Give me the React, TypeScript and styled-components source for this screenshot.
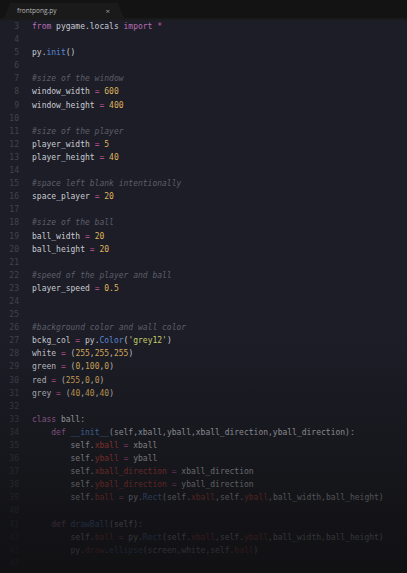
import React from "react";
import styled, { createGlobalStyle } from "styled-components";

const Global = createGlobalStyle`
  html, body { margin: 0; padding: 0; background: #1c1d26; }
  body { width: 407px; height: 573px; overflow: hidden; }
`;

const Window = styled.div`
  position: relative;
  width: 407px;
  height: 573px;
  background: #1c1d26;
  overflow: hidden;
  display: flex;
  flex-direction: column;
`;

const TabBar = styled.div`
  height: 18px;
  background: #131313;
  border-bottom: 2px solid #1a1a1a;
  display: flex;
  align-items: flex-end;
  padding-left: 4px;
`;

const Tab = styled.div`
  width: 120px;
  height: 15px;
  background: #1a1a1a;
  clip-path: polygon(6px 0, 114px 0, 120px 100%, 0 100%);
  display: flex;
  align-items: center;
  justify-content: space-between;
  padding: 0 14px 0 13px;
  box-sizing: border-box;
  font-family: "Open Sans", "Liberation Sans", sans-serif;
  font-size: 6.5px;
  color: #b8b8b8;
`;

const Close = styled.span`
  font-size: 8px;
  color: #9a9a9a;
`;

const Editor = styled.div`
  flex: 1;
  font-family: "DejaVu Sans Mono", "Liberation Mono", monospace;
  font-size: 8px;
`;

const Line = styled.div`
  display: flex;
  height: 13.1px;
  line-height: 13.1px;
  white-space: pre;
`;

const Num = styled.span`
  width: 19px;
  text-align: right;
  color: #42444f;
  flex-shrink: 0;
`;

const Code = styled.span`
  padding-left: 13px;
  color: #c9cbd2;
`;

const colors: Record<string, string> = {
  t: "#c9cbd2",
  k: "#b86fb4",
  o: "#c9589c",
  n: "#dfb25e",
  s: "#c7d26c",
  f: "#5b8ad8",
  a: "#c4463e",
  c: "#5c5e6a",
};

const Tok = styled.span<{ $k: string }>`
  color: ${(p) => colors[p.$k]};
  font-style: ${(p) => (p.$k === "c" ? "italic" : "normal")};
`;

const Fade = styled.div`
  position: absolute;
  left: 0;
  right: 0;
  bottom: 0;
  height: 240px;
  pointer-events: none;
  background: linear-gradient(to bottom, rgba(16,16,18,0) 0%, rgba(16,16,18,0.4) 45%, rgba(16,16,18,0.78) 80%, rgba(16,16,18,0.9) 100%);
`;

type T = [string, string];
const lines: T[][] = [
  [["from", "k"], [" pygame.locals ", "t"], ["import", "k"], [" *", "o"]],
  [],
  [["py.", "t"], ["init", "f"], ["()", "t"]],
  [],
  [["#size of the window", "c"]],
  [["window_width ", "t"], ["=", "o"], [" ", "t"], ["600", "n"]],
  [["window_height ", "t"], ["=", "o"], [" ", "t"], ["400", "n"]],
  [],
  [["#size of the player", "c"]],
  [["player_width ", "t"], ["=", "o"], [" ", "t"], ["5", "n"]],
  [["player_height ", "t"], ["=", "o"], [" ", "t"], ["40", "n"]],
  [],
  [["#space left blank intentionally", "c"]],
  [["space_player ", "t"], ["=", "o"], [" ", "t"], ["20", "n"]],
  [],
  [["#size of the ball", "c"]],
  [["ball_width ", "t"], ["=", "o"], [" ", "t"], ["20", "n"]],
  [["ball_height ", "t"], ["=", "o"], [" ", "t"], ["20", "n"]],
  [],
  [["#speed of the player and ball", "c"]],
  [["player_speed ", "t"], ["=", "o"], [" ", "t"], ["0.5", "n"]],
  [],
  [],
  [["#background color and wall color", "c"]],
  [["bckg_col ", "t"], ["=", "o"], [" py.", "t"], ["Color", "f"], ["(", "t"], ["'grey12'", "s"], [")", "t"]],
  [["white ", "t"], ["=", "o"], [" (", "t"], ["255", "n"], [",", "t"], ["255", "n"], [",", "t"], ["255", "n"], [")", "t"]],
  [["green ", "t"], ["=", "o"], [" (", "t"], ["0", "n"], [",", "t"], ["100", "n"], [",", "t"], ["0", "n"], [")", "t"]],
  [["red ", "t"], ["=", "o"], [" (", "t"], ["255", "n"], [",", "t"], ["0", "n"], [",", "t"], ["0", "n"], [")", "t"]],
  [["grey ", "t"], ["=", "o"], [" (", "t"], ["40", "n"], [",", "t"], ["40", "n"], [",", "t"], ["40", "n"], [")", "t"]],
  [],
  [["class", "k"], [" ball:", "t"]],
  [["    ", "t"], ["def", "k"], [" ", "t"], ["__init__", "f"], ["(self,xball,yball,xball_direction,yball_direction):", "t"]],
  [["        self.", "t"], ["xball", "a"], [" ", "t"], ["=", "o"], [" xball", "t"]],
  [["        self.", "t"], ["yball", "a"], [" ", "t"], ["=", "o"], [" yball", "t"]],
  [["        self.", "t"], ["xball_direction", "a"], [" ", "t"], ["=", "o"], [" xball_direction", "t"]],
  [["        self.", "t"], ["yball_direction", "a"], [" ", "t"], ["=", "o"], [" yball_direction", "t"]],
  [["        self.", "t"], ["ball", "a"], [" ", "t"], ["=", "o"], [" py.", "t"], ["Rect", "f"], ["(self.", "t"], ["xball", "a"], [",self.", "t"], ["yball", "a"], [",ball_width,ball_height)", "t"]],
  [],
  [["    ", "t"], ["def", "k"], [" ", "t"], ["drawBall", "f"], ["(self):", "t"]],
  [["        self.", "t"], ["ball", "a"], [" ", "t"], ["=", "o"], [" py.", "t"], ["Rect", "f"], ["(self.", "t"], ["xball", "a"], [",self.", "t"], ["yball", "a"], [",ball_width,ball_height)", "t"]],
  [["        py.", "t"], ["draw", "a"], [".", "t"], ["ellipse", "f"], ["(screen,white,self.", "t"], ["ball", "a"], [")", "t"]],
  [],
];

export default function App() {
  return (
    <Window>
      <Global />
      <TabBar>
        <Tab>
          <span>frontpong.py</span>
          <Close>×</Close>
        </Tab>
      </TabBar>
      <Editor>
        {lines.map((l, i) => (
          <Line key={i}>
            <Num>{i + 3}</Num>
            <Code>
              {l.map(([text, k], j) => (
                <Tok key={j} $k={k}>
                  {text}
                </Tok>
              ))}
            </Code>
          </Line>
        ))}
      </Editor>
      <Fade />
    </Window>
  );
}
